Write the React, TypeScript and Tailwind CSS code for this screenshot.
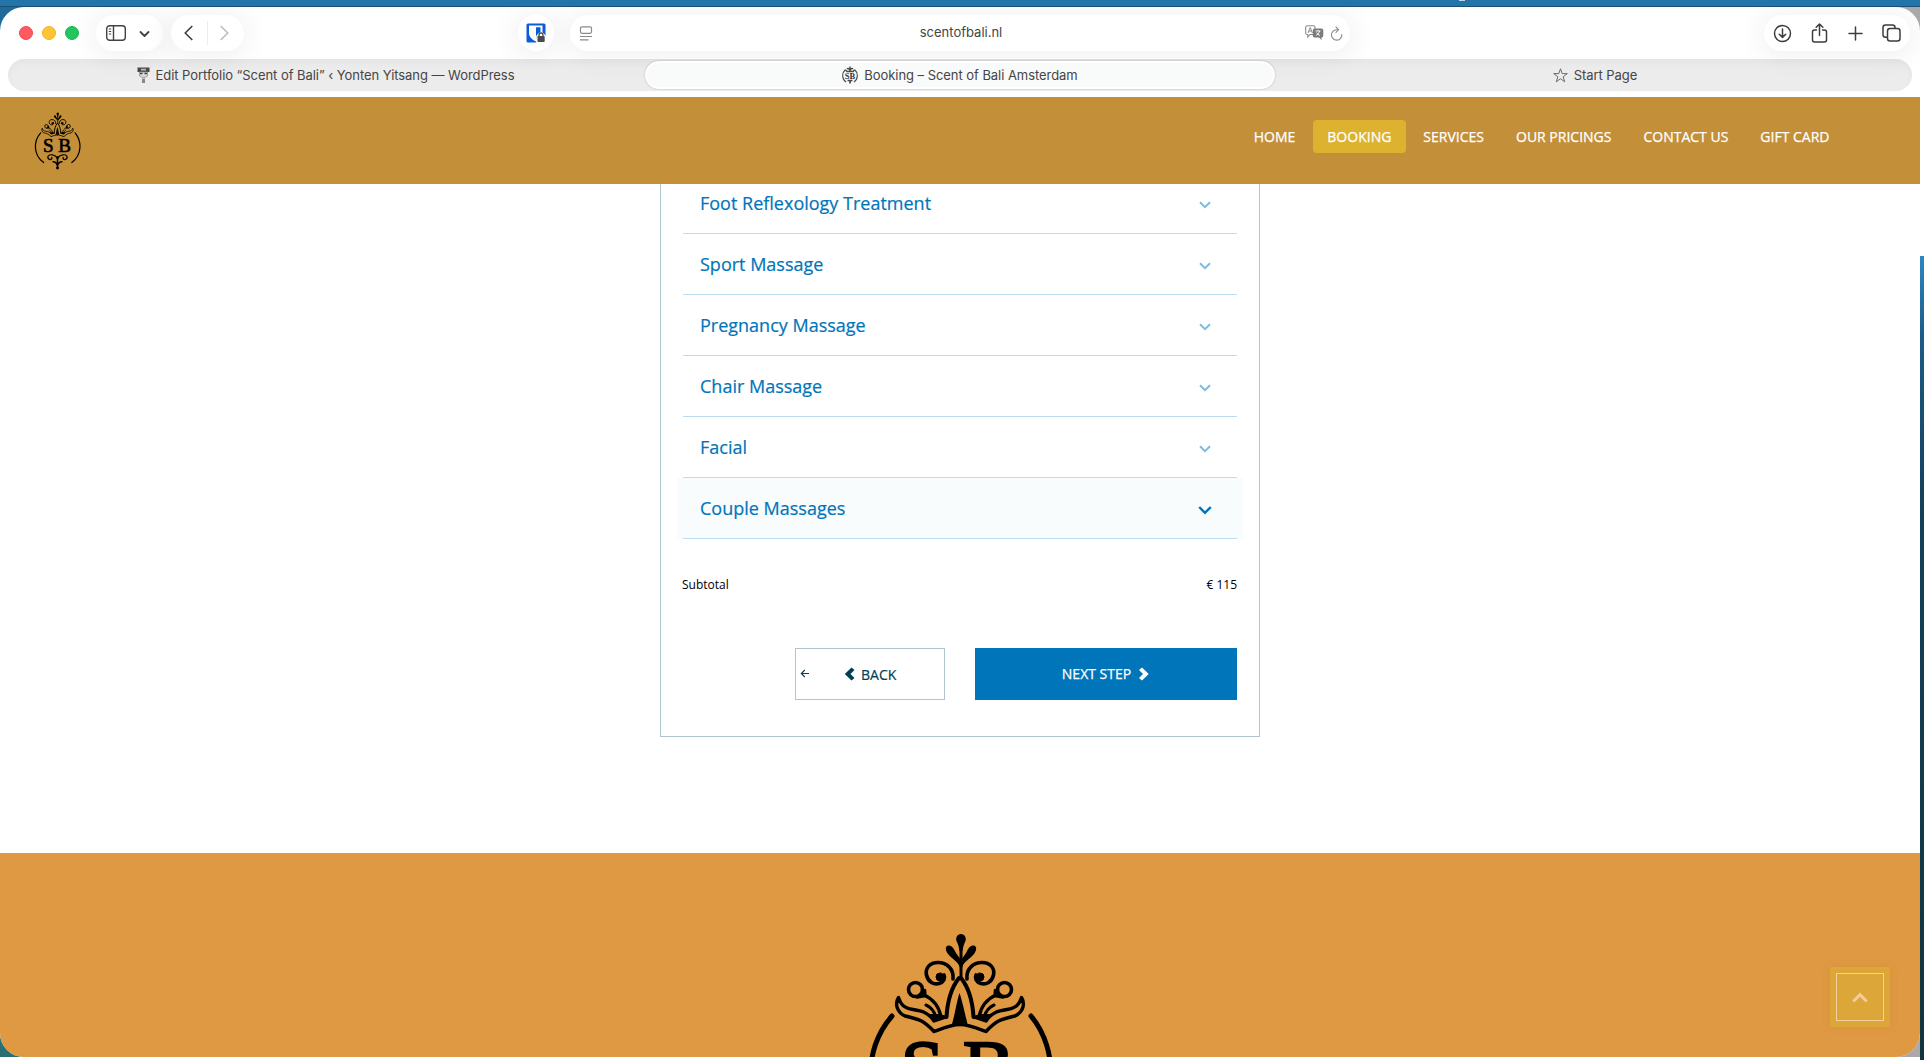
import React from "react";

interface NavItem {
  label: string;
  active?: boolean;
}

const navItems: NavItem[] = [
  { label: "HOME" },
  { label: "BOOKING", active: true },
  { label: "SERVICES" },
  { label: "OUR PRICINGS" },
  { label: "CONTACT US" },
  { label: "GIFT CARD" },
];

const treatments = [
  "Foot Reflexology Treatment",
  "Sport Massage",
  "Pregnancy Massage",
  "Chair Massage",
  "Facial",
];

const pill =
  "flex h-9 items-center rounded-full bg-white shadow-[0_2px_26px_6px_rgba(0,0,0,0.05)]";

const row =
  "flex h-[61px] items-center justify-between border-b border-[#bbdcee] pr-[25px] pl-[17px] text-lg font-medium text-[#0075ba] [-webkit-text-stroke:0.2px]";

// Half of the crown, mirrored around x = 110
const CrownHalf: React.FC = () => (
  <g fill="none" stroke="#000" strokeLinecap="round" strokeLinejoin="round">
    <path d="M103 69C104 59 97 52.500 88 52.500C80 52.500 75 58 76.500 65C78 72 84 75 89 73.500C94 72 95.500 68 94 65" strokeWidth="3.600" />
    <circle cx="90" cy="67" r="4" fill="#000" />
    <path d="M109 68C101 78 97.500 90 96.500 107" strokeWidth="4" />
    <circle cx="65.500" cy="79.500" r="7" strokeWidth="3.600" />
    <path d="M67 87.500L75 80L75.500 86Z" fill="#000" strokeWidth="2.500" />
    <path d="M74 85C83 89 89 96 91 107" strokeWidth="3.200" />
    <path d="M76 95C81 97 84 101 86 107" strokeWidth="3" />
    <path d="M84 110L80 105L90 105L96 107Z" fill="#000" strokeWidth="2" />
    <path d="M96 107L84 111C78 102 72 101 63 99.500C54 98 51 95 48.500 87.500C44.500 94 47 102 55 106C66 109 71 108 84 121.500C96 117 102 114.500 110 114.500" strokeWidth="3.400" />
  </g>
);

const Crown: React.FC = () => (
  <>
    <CrownHalf />
    <g transform="translate(220 0) scale(-1 1)">
      <CrownHalf />
    </g>
    <path d="M109.500 83C112 90 115 104 117.500 114H102C105 104 107 90 109.500 83Z" />
    <path d="M111 38V68" stroke="#000" strokeWidth="3" />
    <path d="M111 24C115 24 116.500 28 115.500 31C114 34 113 37 112.500 41H109.500C109 37 108 34 106.500 31C105.500 28 107 24 111 24Z" />
    <path d="M110 58C109 52 102 49 98 44C95 40 95 36 98.500 35.500C102 35 104 39 106 43L111 50Z" />
    <path d="M112 58C113 52 120 49 124 44C127 40 127 36 123.500 35.500C120 35 118 39 116 43L111 50Z" />
  </>
);

interface EmblemProps {
  className?: string;
}

const Emblem: React.FC<EmblemProps> = ({ className }) => (
  <svg className={className} viewBox="18 22 184 234">
    <Crown />
    <g fill="none" stroke="#000" strokeWidth="5" strokeLinecap="round">
      <path d="M42 106C12 140 12 196 54 226" />
      <path d="M181 106C209 140 209 196 168 226" />
      <path d="M110 212C104 194 74 188 71 203C71 217 91 217 87 205M110 212C116 194 146 188 149 203C149 217 129 217 133 205" />
      <path d="M110 203V248M92 223C102 223 107 230 110 239C113 230 118 223 128 223" strokeWidth="6" />
    </g>
    <circle cx="110" cy="248" r="6" />
    <g fontFamily="Liberation Serif, serif" fontSize="77" stroke="#000" strokeWidth="2.500">
      <text x="51" y="183">S</text>
      <text x="113" y="183">B</text>
    </g>
  </svg>
);

const EmblemFavicon: React.FC = () => (
  <svg width="16" height="18" viewBox="0 0 16 18">
    <g fill="none" stroke="#4a4a4a">
      <path d="M3.500 3.500C-0.500 7 -0.200 13 4 16M12.500 3.500C16.500 7 16.200 13 12 16" strokeWidth="1.100" />
      <path d="M3.500 4L5 5.500H11L12.500 4M5 3Q6.500 1.500 8 4.500Q9.500 1.500 11 3M8 0.500V5.500" strokeWidth="1.500" />
      <path d="M5.500 14.500H10.500M8 14V17.500" strokeWidth="1.700" />
    </g>
    <text x="8" y="13" textAnchor="middle" fontFamily="Liberation Serif, serif" fontSize="8.500" fontWeight="700" fill="#333">
      SB
    </text>
  </svg>
);

const ChevronDown: React.FC<{ bold?: boolean }> = ({ bold }) => (
  <svg
    className="mt-[3px]"
    width="14"
    height="10"
    viewBox="0 0 14 10"
    fill="none"
    stroke={bold ? "#0075ba" : "#7dbbe0"}
    strokeWidth={bold ? 2.4 : 2}
  >
    <path d={bold ? "M1.200 2L7 7.800L12.800 2" : "M2 2.200L7 7.200L12 2.200"} />
  </svg>
);

const Toolbar: React.FC = () => (
  <div className="flex h-[52px] items-center pr-2.5 pl-[19px]">
    <div className="flex gap-[9px]">
      <span className="size-3.5 rounded-full border border-[#ed4c52] bg-[#ff5a5f]" />
      <span className="size-3.5 rounded-full border border-[#edb42c] bg-[#fdc435]" />
      <span className="size-3.5 rounded-full border border-[#1cb552] bg-[#22c55e]" />
    </div>
    <div className={`${pill} ml-[17px] w-[67px] pl-2.5`}>
      <svg width="20" height="16" viewBox="0 0 20 16" fill="none" stroke="#424242" strokeWidth="1.400">
        <rect x="0.700" y="0.700" width="18.600" height="14.600" rx="3" />
        <path d="M7.500 1V15" />
        <path d="M2.800 4H5.200M2.800 6.500H5.200M2.800 9H5.200" strokeWidth="1" />
      </svg>
      <svg className="mt-px ml-[13px]" width="11" height="8" viewBox="0 0 11 8" fill="none" stroke="#424242" strokeWidth="1.800" strokeLinecap="round" strokeLinejoin="round">
        <path d="M1.500 2L5.500 6L9.500 2" />
      </svg>
    </div>
    <div className={`${pill} ml-2 w-[73px] pl-[13px]`}>
      <svg width="9" height="16" viewBox="0 0 9 16" fill="none" stroke="#424242" strokeWidth="1.700" strokeLinecap="round" strokeLinejoin="round">
        <path d="M7.800 1.500L1.200 8L7.800 14.500" />
      </svg>
      <span className="ml-3.5 h-6 w-px bg-[#ececec]" />
      <svg className="ml-3" width="9" height="16" viewBox="0 0 9 16" fill="none" stroke="#bdbdbd" strokeWidth="1.700" strokeLinecap="round" strokeLinejoin="round">
        <path d="M1.200 1.500L7.800 8L1.200 14.500" />
      </svg>
    </div>
    <div className={`${pill} ml-[274px] w-9 justify-center`}>
      <svg width="20" height="20" viewBox="0 0 20 20">
        <rect x="0.500" y="0.500" width="19" height="19" rx="1.500" fill="#0b5cd7" />
        <path d="M3 2.500H16.500V10C16.500 14 13.500 16.500 10 18.500C6 16.500 3 14 3 10Z" fill="#fff" />
        <path d="M10 4.200H14.500V10C14.500 12.500 12.500 14.300 10 15.500Z" fill="#0b5cd7" />
        <path d="M10.200 12.500H11.200V11.500Q15 6.500 18.800 11.500V12.500H20V20H10.200Z" fill="#fff" />
        <path d="M13 13.500V12A2 2 0 0 1 17 12V13.500" fill="none" stroke="#4b4b4b" strokeWidth="1.300" />
        <rect x="11.500" y="13" width="7.200" height="6" rx="0.800" fill="#4b4b4b" />
      </svg>
    </div>
    <div className={`${pill} ml-4 w-[780px] justify-between pr-[7px] pl-[9px]`}>
      <svg width="14" height="15" viewBox="0 0 14 15" fill="none" stroke="#8a8a8a" strokeWidth="1.200">
        <rect x="1.500" y="0.800" width="11" height="6.500" rx="1.500" />
        <path d="M1 10.500H13M1 13.800H9.500" />
      </svg>
      <span className="ml-6 text-[13px] text-[#454545]">scentofbali.nl</span>
      <div className="flex items-center gap-1.5">
        <svg width="19" height="16" viewBox="0 0 19 16">
          <path d="M2.500 0.700H8.500Q10 0.700 10 2.200V9.500H5L2.800 12V9.500H2.200Q0.700 9.500 0.700 8V2.200Q0.700 0.700 2.500 0.700Z" fill="#fff" stroke="#8c8c8c" strokeWidth="1.100" />
          <path d="M3 8L5.200 2.500L7.400 8M3.800 6H6.600" fill="none" stroke="#8c8c8c" />
          <path d="M9.500 3.500H16.500Q18.300 3.500 18.300 5.300V10.700Q18.300 12.500 16.500 12.500V15L14 12.500H9.500Q7.800 12.500 7.800 10.700V5.300Q7.800 3.500 9.500 3.500Z" fill="#7b7b7b" />
          <path d="M10.500 6H15.500M13 5V6M11 10.500Q14 9 14.700 6M11.500 7.500Q12.500 9.500 15 10.500" fill="none" stroke="#fff" strokeWidth="0.900" />
        </svg>
        <svg width="13" height="15" viewBox="0 0 13 15" fill="none" stroke="#8c8c8c" strokeWidth="1.100" strokeLinecap="round" strokeLinejoin="round">
          <path d="M11.800 8.500A5.200 5.200 0 1 1 6.500 3.700H8" />
          <path d="M6 1L8.600 3.700L6 6.300" />
        </svg>
      </div>
    </div>
    <div className={`${pill} ml-auto w-[146px] justify-between px-[9px]`}>
      <svg width="19" height="19" viewBox="0 0 19 19" fill="none" stroke="#3d3d3d" strokeWidth="1.500" strokeLinecap="round" strokeLinejoin="round">
        <circle cx="9.500" cy="9.500" r="8" />
        <path d="M9.500 5V13M6.300 10.200L9.500 13.400L12.700 10.200" />
      </svg>
      <svg width="17" height="20" viewBox="0 0 17 20" fill="none" stroke="#3d3d3d" strokeWidth="1.500" strokeLinecap="round" strokeLinejoin="round">
        <path d="M5.500 7H3.500Q1.500 7 1.500 9V17Q1.500 19 3.500 19H13.500Q15.500 19 15.500 17V9Q15.500 7 13.500 7H11.500" />
        <path d="M8.500 12.500V1.300M5.200 4.300L8.500 1L11.800 4.300" />
      </svg>
      <svg width="15" height="15" viewBox="0 0 15 15" stroke="#3d3d3d" strokeWidth="1.500" strokeLinecap="round">
        <path d="M7.500 1V14M1 7.500H14" />
      </svg>
      <svg width="19" height="18" viewBox="0 0 19 18" fill="none" stroke="#3d3d3d" strokeWidth="1.500">
        <rect x="5.500" y="4.500" width="12.500" height="12.500" rx="2.500" />
        <path d="M5 13.200H3.500Q1 13.200 1 10.700V3.500Q1 1 3.500 1H10.500Q13 1 13 3.500V4" />
      </svg>
    </div>
  </div>
);

const TabBar: React.FC = () => (
  <div className="mx-2 flex h-8 items-center rounded-full bg-[#ececec] text-[13px] tracking-[-0.004em] text-[#454545] shadow-[inset_0_4px_8px_rgba(0,0,0,0.03)]">
    <div className="flex w-[637px] items-center justify-center gap-1.5 pr-[2px]">
      <svg width="13" height="17" viewBox="0 0 13 17">
        <path d="M0.500 0.500H12.500V5H0.500Z" fill="#494949" />
        <path d="M4 1.800H9V3.500H4Z" fill="#bbb" />
        <path d="M2.500 5V9Q4 10.500 6.500 10.500Q9 10.500 10.500 9V5Z" fill="#d9d9d9" stroke="#858585" strokeWidth="0.700" />
        <path d="M3 6.500H5.500M7.500 6.500H10" stroke="#444" strokeWidth="1.300" />
        <path d="M5 11.500H8V16H5Z" fill="#888" />
      </svg>
      <span className="pt-0.5">Edit Portfolio “Scent of Bali” ‹ Yonten Yitsang — WordPress</span>
    </div>
    <div className="flex h-7 w-[630px] items-center justify-center gap-1.5 rounded-full border-2 border-white bg-[#f9fafa] shadow-[0_0_2px_rgba(0,0,0,0.25)]">
      <EmblemFavicon />
      <span className="pt-0.5">Booking – Scent of Bali Amsterdam</span>
    </div>
    <div className="flex flex-1 items-center justify-center gap-1.5 pl-[3px]">
      <svg width="15" height="15" viewBox="0 0 15 15" fill="none" stroke="#6a6a6a">
        <path d="M7.500 0.800L9.200 5.600H14.300L10.200 8.700L11.700 13.800L7.500 10.700L3.300 13.800L4.800 8.700L0.700 5.600H5.800Z" />
      </svg>
      <span className="pt-0.5">Start Page</span>
    </div>
  </div>
);

const SiteHeader: React.FC = () => (
  <header className="flex h-[87px] items-center justify-between bg-[#c48f39] pr-[76px] pl-[34px] font-['Open_Sans',sans-serif]">
    <Emblem className="h-[58px] w-[47px]" />
    <nav className="-mt-2 flex gap-[3px]">
      {navItems.map(({ label, active }) => (
        <a
          key={label}
          className={`flex h-[33px] items-center rounded px-[14.5px] text-sm font-medium text-white [-webkit-text-stroke:0.25px] ${active ? "bg-[#dcb22f]" : ""}`}
        >
          {label}
        </a>
      ))}
    </nav>
  </header>
);

const BookingCard: React.FC = () => (
  <section className="mx-auto h-[553px] w-[600px] overflow-hidden border border-t-0 border-[#afc6cf] px-[22px]">
    <div className="-mt-[11px]">
      {treatments.map((name) => (
        <div key={name} className={row}>
          {name}
          <ChevronDown />
        </div>
      ))}
      <div className="-mx-1.5 bg-[#f8fcfd] px-1.5">
        <div className={row}>
          Couple Massages
          <ChevronDown bold />
        </div>
      </div>
    </div>
    <div className="mt-9 -ml-px flex justify-between text-xs leading-5 text-black">
      <span>Subtotal</span>
      <span>€ 115</span>
    </div>
    <div className="mt-[53px] flex justify-end gap-[30px]">
      <button className="flex h-[52px] w-[150px] items-center border border-[#afc6cf] pl-1 text-sm text-[#003f55]">
        <svg width="10" height="10" viewBox="0 0 10 10" fill="none" stroke="#003f55" strokeWidth="1.100">
          <path d="M9 4.500H1.500M4.800 1L1.300 4.500L4.800 8" />
        </svg>
        <svg className="ml-[34px]" width="11" height="14" viewBox="0 0 11 14" fill="#003f55">
          <path d="M7.500 0.500L10.500 3L6.500 7L10.500 11L7.500 13.500L0.800 7Z" />
        </svg>
        <span className="ml-1.5 pt-0.5 [-webkit-text-stroke:0.2px]">BACK</span>
      </button>
      <button className="flex h-[52px] w-[262px] items-center justify-center gap-[7px] bg-[#0075ba] text-sm font-medium text-white">
        <span className="[-webkit-text-stroke:0.25px]">NEXT STEP</span>
        <svg width="12" height="14" viewBox="0 0 11 14" fill="#fff">
          <path d="M3.500 0.500L0.500 3L4.500 7L0.500 11L3.500 13.500L10.200 7Z" />
        </svg>
      </button>
    </div>
  </section>
);

const SiteFooter: React.FC = () => (
  <footer className="relative h-[204px] overflow-hidden bg-[#df9942] pt-[79px]">
    <Emblem className="mx-auto h-[234px] w-[184px]" />
    <button className="absolute right-[30px] bottom-[30px] size-[60px] bg-[#dda638] p-1.5 shadow-[0_0_8px_rgba(180,110,30,0.15)]">
      <span className="flex size-12 items-center justify-center border border-[#f3d09c]">
        <svg width="16" height="11" viewBox="0 0 16 11" fill="none" stroke="#f3cd9c" strokeWidth="3">
          <path d="M1.200 9.500L8 2.700L14.800 9.500" />
        </svg>
      </span>
    </button>
  </footer>
);

export default function App() {
  return (
    <div className="flex h-[1060px] w-[1924px] overflow-hidden bg-white font-[Inter,sans-serif]">
      <div className="h-[1057px] w-[1920px] bg-[linear-gradient(90deg,transparent_50%,#a9a9a9_50%),linear-gradient(#1f6a9c,#2b6f73)]">
        <div className="h-[7px] border-b border-[#174f75] bg-[#2374a9]">
          <div className="ml-[1459px] h-px w-1.5 bg-white/70" />
        </div>
        <div className="h-[1050px] overflow-hidden rounded-[24px] bg-white">
          <div className="h-[90px]">
            <Toolbar />
            <TabBar />
          </div>
          <SiteHeader />
          <main className="h-[669px] bg-white font-['Open_Sans',sans-serif]">
            <BookingCard />
          </main>
          <SiteFooter />
        </div>
      </div>
      {/* desktop showing beside the window */}
      <div className="mt-64 flex-1 bg-[linear-gradient(#2e86c1,#1b5c88_80px,#14405a_250px,#12343d)]" />
    </div>
  );
}
